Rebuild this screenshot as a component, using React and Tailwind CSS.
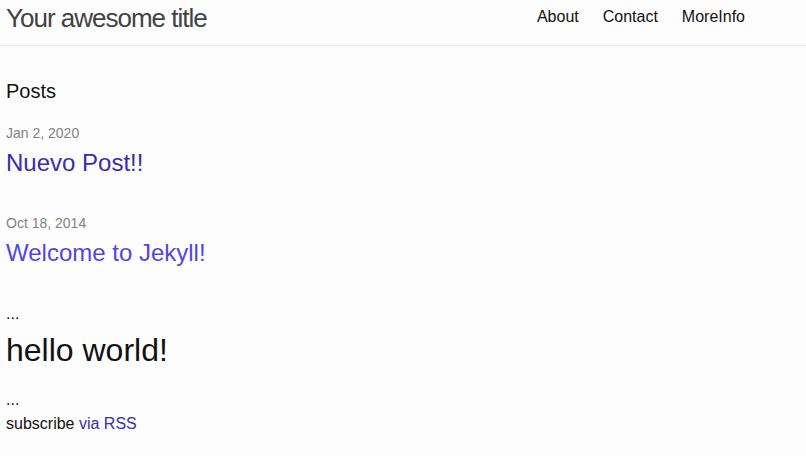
import React from 'react';

const posts = [
    { date: 'Jan 2, 2020', title: 'Nuevo Post!!', color: 'text-[#3a2cab]' },
    { date: 'Oct 18, 2014', title: 'Welcome to Jekyll!', color: 'text-[#5445e4]' },
];

const App = () => {
    return (
        <div className="min-h-[456px] bg-[#fdfdfd] text-[#111111] font-['Liberation_Sans',Arial,sans-serif]">
            {/* header */}
            <header className="flex justify-between h-[46px] border-b border-[#e8e8e8]">
                <a href="#" className="pl-[6px] pt-[2px] text-[26px] leading-[32px] tracking-[-1px] text-[#424242]">
                    Your awesome title
                </a>
                <nav className="flex gap-[24px] pr-[61px] pt-[5px] text-[16px] leading-[24px] text-[#111111]">
                    <a href="#">About</a>
                    <a href="#">Contact</a>
                    <a href="#">MoreInfo</a>
                </nav>
            </header>

            <main className="px-[6px]">
                <h2 className="mt-[31px] text-[20px] leading-[28px]">Posts</h2>

                <ul>
                    {posts.map((post, i) => (
                        <li key={i} className={i === 0 ? 'mt-[18px]' : 'mt-[34px]'}>
                            <span className="block text-[14px] leading-[20px] text-[#828282]">{post.date}</span>
                            <a href="#" className={`block mt-[4px] text-[24px] leading-[32px] ${post.color}`}>
                                {post.title}
                            </a>
                        </li>
                    ))}
                </ul>

                <p className="mt-[33px] text-[16px] leading-[24px]">...</p>
                <h1 className="mt-[4px] text-[32px] leading-[40px]">hello world!</h1>
                <p className="mt-[18px] text-[16px] leading-[24px]">...</p>
                <p className="text-[16px] leading-[24px]">
                    subscribe <a href="#" className="text-[#3a2cab]">via RSS</a>
                </p>
            </main>
        </div>
    );
};

export default App;
